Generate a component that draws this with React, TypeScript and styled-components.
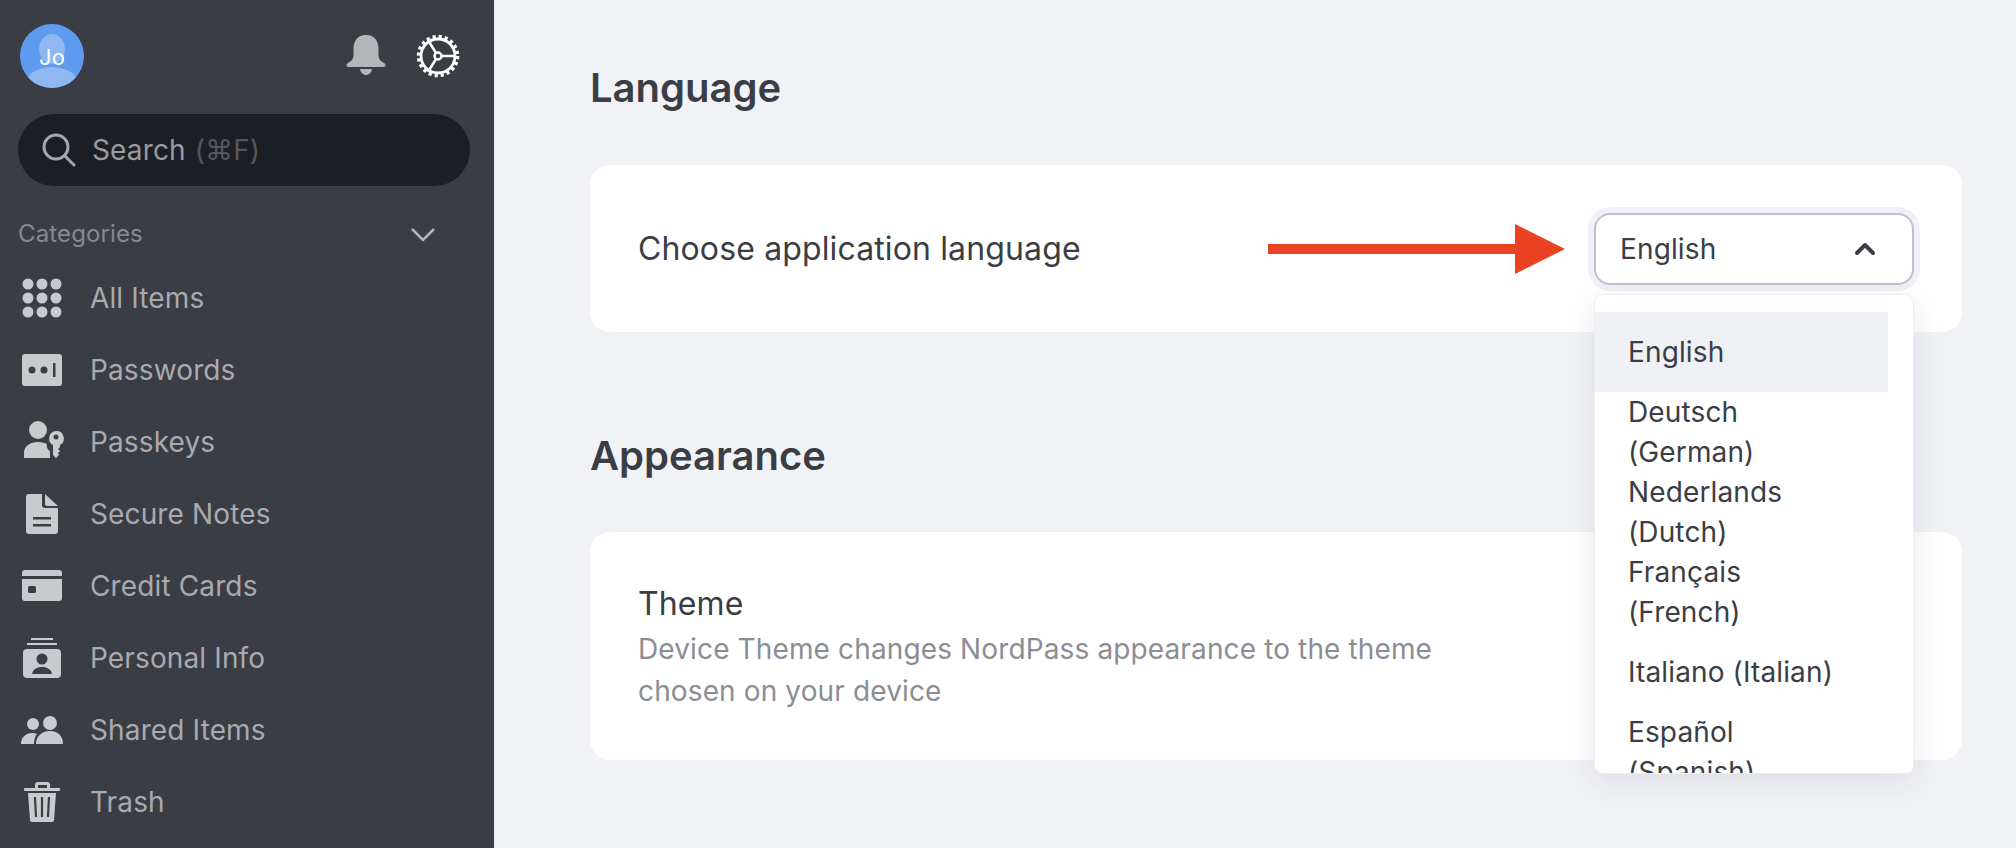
import React from "react";
import styled, { createGlobalStyle } from "styled-components";

const GlobalStyle = createGlobalStyle`
  html, body {
    margin: 0;
    height: 100%;
    overflow: hidden;
  }
  body {
    font-family: Inter, "Noto Sans", sans-serif;
    letter-spacing: 0.13px;
    background: #f1f2f6;
    color: #3b3d45;
  }
`;

const Page = styled.div`
  display: flex;
  height: 848px;
  overflow: hidden;
`;

const Sidebar = styled.aside`
  flex: 0 0 494px;
  box-sizing: border-box;
  background: #3b3d45;
  padding: 24px 24px 0 18px;
`;

const TopRow = styled.div`
  display: flex;
  align-items: center;
  justify-content: space-between;
  height: 64px;
  padding-left: 2px;
`;

const Avatar = styled.div`
  position: relative;
  display: flex;
  align-items: center;
  justify-content: center;
  width: 64px;
  height: 64px;
  border-radius: 50%;
  overflow: hidden;
  background: #5e9bee;
  color: #fff;
  font-size: 22px;
  padding-top: 2px;
  box-sizing: border-box;

  &::before {
    content: "";
    position: absolute;
    left: 19px;
    top: 10px;
    width: 26px;
    height: 30px;
    border-radius: 50%;
    background: #8fb8f3;
  }
  &::after {
    content: "";
    position: absolute;
    left: 4px;
    top: 43px;
    width: 56px;
    height: 40px;
    border-radius: 50%;
    background: #8fb8f3;
  }
`;

const AvatarText = styled.span`
  position: relative;
  z-index: 1;
`;

const TopIcons = styled.div`
  display: flex;
  align-items: center;
  gap: 30px;
  padding-right: 10px;
`;

const SearchBox = styled.div`
  display: flex;
  align-items: center;
  height: 72px;
  margin-top: 26px;
  padding-left: 24px;
  border-radius: 36px;
  background: #1c1e26;
  font-size: 28px;
  color: #9a9ba0;
`;

const SearchLabel = styled.span`
  margin-left: 16px;
`;

const SearchHint = styled.span`
  margin-left: 9px;
  color: #55565c;
`;

const CategoriesRow = styled.div`
  display: flex;
  align-items: center;
  justify-content: space-between;
  height: 30px;
  margin-top: 32px;
  padding-right: 34px;
  font-size: 24px;
  color: #88898f;

  svg {
    margin-top: 4px;
  }
`;

const NavList = styled.nav`
  display: flex;
  flex-direction: column;
  margin-top: 14px;
`;

const NavItem = styled.div`
  display: flex;
  align-items: center;
  height: 72px;
  padding-left: 2px;
  gap: 26px;
  font-size: 28px;
  color: #a9aaaf;
`;

const Main = styled.main`
  flex: 1;
  box-sizing: border-box;
  padding: 0 54px 0 96px;
`;

const SectionTitle = styled.h2<{ $top: number }>`
  margin: ${({ $top }) => $top}px 0 0;
  height: 48px;
  line-height: 48px;
  font-size: 40px;
  font-weight: 600;
  letter-spacing: 0;
  color: #3b3d45;
`;

const Card = styled.section<{ $height: number; $gap: number }>`
  display: flex;
  align-items: center;
  justify-content: space-between;
  box-sizing: border-box;
  height: ${({ $height }) => $height}px;
  margin-top: ${({ $gap }) => $gap}px;
  padding: 0 48px;
  border-radius: 20px;
  background: #fff;
`;

const CardLabel = styled.div`
  font-size: 32px;
  color: #3b3d45;
`;

const CardCopy = styled.div`
  width: 830px;
  padding-top: 2px;
`;

const CardTitle = styled.div`
  font-size: 32px;
  line-height: 42px;
  color: #3b3d45;
`;

const CardHint = styled.div`
  margin-top: 3px;
  font-size: 28px;
  line-height: 42px;
  color: #8c8d94;
`;

const SelectGroup = styled.div`
  position: relative;
  display: flex;
  align-items: center;
`;

const Arrow = styled.svg`
  display: block;
  margin-right: 29px;
`;

const SelectBox = styled.div`
  display: flex;
  align-items: center;
  justify-content: space-between;
  box-sizing: border-box;
  width: 320px;
  height: 72px;
  padding: 0 36px 0 24px;
  border: 2px solid #bfc0c8;
  border-radius: 16px;
  box-shadow: 0 0 0 6px #f0f1f6;
  background: #fff;
  font-size: 28px;
  color: #3b3d45;
`;

const Menu = styled.div`
  position: absolute;
  top: 82px;
  right: 1px;
  width: 318px;
  height: 478px;
  box-sizing: border-box;
  padding-top: 17px;
  overflow: hidden;
  background: #fff;
  border-radius: 8px;
  box-shadow: 0 0 0 1px #eeeff3, 0 8px 32px rgba(40, 42, 60, 0.1);
  z-index: 5;
`;

const MenuItem = styled.div<{ $active?: boolean }>`
  display: flex;
  align-items: center;
  box-sizing: border-box;
  width: 293px;
  min-height: 80px;
  padding-left: 33px;
  background: ${({ $active }) => ($active ? "#f0f1f5" : "transparent")};
  font-size: 28px;
  line-height: 40px;
  color: #3b3d45;
`;

const MenuLabel = styled.span`
  width: 218px;
`;

const ICON = "#c9cace";
const HOLE = "#3b3d45";

const BellIcon = () => (
  <svg width="40" height="42" viewBox="0 0 40 42" fill="#b4b5b9">
    <path d="M20 0c-8.500 0-12.500 6-12.500 14v6c0 4-2 6-5.500 8-2 1-2 4 .5 4h35c2.500 0 2.500-3 .5-4-3.500-2-5.500-4-5.500-8v-6C32.500 6 28.500 0 20 0z" />
    <path d="M14 34h12c-.5 3.500-3 6-6 6s-5.500-2.500-6-6z" />
  </svg>
);

const GearIcon = () => (
  <svg width="44" height="44" viewBox="0 0 44 44" fill="none" stroke="#fff">
    <circle cx="22" cy="22" r="19.500" strokeWidth="3.500" strokeDasharray="3.200 2.930" />
    <circle cx="22" cy="22" r="17" strokeWidth="2.800" />
    <circle cx="22" cy="22" r="3.500" strokeWidth="2.500" />
    <path d="M25.500 22H39M20 19 12 6M20 25 12 38" strokeWidth="2.500" />
  </svg>
);

const SearchIcon = () => (
  <svg width="34" height="34" viewBox="0 0 34 34" fill="none" stroke="#a5a6ab" strokeWidth="3">
    <circle cx="14" cy="14" r="12" />
    <path d="M23 23l9 9" strokeLinecap="round" />
  </svg>
);

const ChevronDown = () => (
  <svg width="26" height="16" viewBox="0 0 26 16" fill="none" stroke="#b4b5b9" strokeWidth="2.500">
    <path d="M2 2l11 11L24 2" />
  </svg>
);

const ChevronUp = () => (
  <svg width="22" height="14" viewBox="0 0 22 14" fill="none" stroke="#3b3d45" strokeWidth="4" strokeLinecap="round" strokeLinejoin="round">
    <path d="M3 11l8-8 8 8" />
  </svg>
);

const NavIcon = ({ children }: { children: React.ReactNode }) => (
  <svg width="44" height="44" viewBox="0 0 44 44" fill={ICON}>
    {children}
  </svg>
);

const navItems: { label: string; icon: React.ReactNode }[] = [
  {
    label: "All Items",
    icon: [8, 22, 36].flatMap((y) =>
      [8, 22, 36].map((x) => <circle key={`${x}-${y}`} cx={x} cy={y} r="5.500" />),
    ),
  },
  {
    label: "Passwords",
    icon: (
      <>
        <rect x="2" y="6" width="40" height="32" rx="3" />
        <circle cx="12" cy="22" r="3.500" fill={HOLE} />
        <circle cx="24" cy="22" r="3.500" fill={HOLE} />
        <rect x="33" y="15" width="2.500" height="14" fill={HOLE} />
      </>
    ),
  },
  {
    label: "Passkeys",
    icon: (
      <>
        <circle cx="18" cy="10" r="9" />
        <path d="M4 38v-5c0-7 6-11 14-11 4 0 7 1 9 2-1 3 1 6 3 7v7z" />
        <path d="M36 11a7.500 7.500 0 0 1 4 14v2l-2 2 2 2-2 2 1 2-3 3-3-3V25a7.500 7.500 0 0 1 3-14z" />
        <circle cx="36" cy="17" r="2.500" fill={HOLE} />
      </>
    ),
  },
  {
    label: "Secure Notes",
    icon: (
      <>
        <path d="M9 2h13v11c0 2 1 3 3 3h13v23c0 2-1 3-3 3H9c-2 0-3-1-3-3V5c0-2 1-3 3-3z" />
        <path d="M25 2l13 12H27c-1 0-2-1-2-2z" />
        <rect x="13" y="25" width="18" height="2.500" fill={HOLE} />
        <rect x="13" y="32" width="18" height="2.500" fill={HOLE} />
      </>
    ),
  },
  {
    label: "Credit Cards",
    icon: (
      <>
        <path d="M5 6h34c2 0 3 1 3 3v3H2V9c0-2 1-3 3-3z" />
        <path d="M2 15h40v19c0 2-1 3-3 3H5c-2 0-3-1-3-3z" />
        <rect x="8" y="22" width="8" height="7" rx="1.500" fill={HOLE} />
      </>
    ),
  },
  {
    label: "Personal Info",
    icon: (
      <>
        <rect x="11" y="2" width="22" height="2" />
        <rect x="7" y="7" width="30" height="2" />
        <rect x="3" y="13" width="38" height="29" rx="4" />
        <circle cx="22" cy="23" r="5.500" fill={HOLE} />
        <path d="M12 38c1-5 5-7 10-7s9 2 10 7z" fill={HOLE} />
      </>
    ),
  },
  {
    label: "Shared Items",
    icon: (
      <>
        <circle cx="13" cy="16" r="6" />
        <circle cx="30" cy="15" r="7" />
        <path d="M1 36c0-7 5-11 11-11 2 0 3 0 5 1-2 2-3 6-3 10z" />
        <path d="M16 36c0-9 7-13 14-13s13 4 13 13z" />
      </>
    ),
  },
  {
    label: "Trash",
    icon: (
      <>
        <path d="M15 9V5c0-2 1-3 3-3h9c2 0 3 1 3 3v4h-3V5h-9v4z" />
        <rect x="4" y="8" width="36" height="3" rx="1" />
        <path d="M8 13h28l-2 27c0 1-1 2-2 2H12c-1 0-2-1-2-2z" />
        <path d="M15 17l1 20M22 17v20M29 17l-1 20" stroke={HOLE} strokeWidth="2.200" fill="none" />
      </>
    ),
  },
];

const languages = [
  "English",
  "Deutsch (German)",
  "Nederlands (Dutch)",
  "Français (French)",
  "Italiano (Italian)",
  "Español (Spanish)",
];

export default function App() {
  return (
    <>
      <GlobalStyle />
      <Page>
        <Sidebar>
          <TopRow>
            <Avatar>
              <AvatarText>Jo</AvatarText>
            </Avatar>
            <TopIcons>
              <BellIcon />
              <GearIcon />
            </TopIcons>
          </TopRow>
          <SearchBox>
            <SearchIcon />
            <SearchLabel>Search</SearchLabel>
            <SearchHint>(⌘F)</SearchHint>
          </SearchBox>
          <CategoriesRow>
            Categories
            <ChevronDown />
          </CategoriesRow>
          <NavList>
            {navItems.map((item) => (
              <NavItem key={item.label}>
                <NavIcon>{item.icon}</NavIcon>
                {item.label}
              </NavItem>
            ))}
          </NavList>
        </Sidebar>
        <Main>
          <SectionTitle $top={64}>Language</SectionTitle>
          <Card $height={167} $gap={53}>
            <CardLabel>Choose application language</CardLabel>
            <SelectGroup>
              <Arrow width="297" height="50" viewBox="0 0 297 50">
                <path d="M0 20h247V0l50 25-50 25V30H0z" fill="#ec4224" />
              </Arrow>
              <SelectBox>
                English
                <ChevronUp />
              </SelectBox>
              <Menu>
                {languages.map((lang) => (
                  <MenuItem key={lang} $active={lang === "English"}>
                    <MenuLabel>{lang}</MenuLabel>
                  </MenuItem>
                ))}
              </Menu>
            </SelectGroup>
          </Card>
          <SectionTitle $top={100}>Appearance</SectionTitle>
          <Card $height={228} $gap={52}>
            <CardCopy>
              <CardTitle>Theme</CardTitle>
              <CardHint>Device Theme changes NordPass appearance to the theme chosen on your device</CardHint>
            </CardCopy>
          </Card>
        </Main>
      </Page>
    </>
  );
}
